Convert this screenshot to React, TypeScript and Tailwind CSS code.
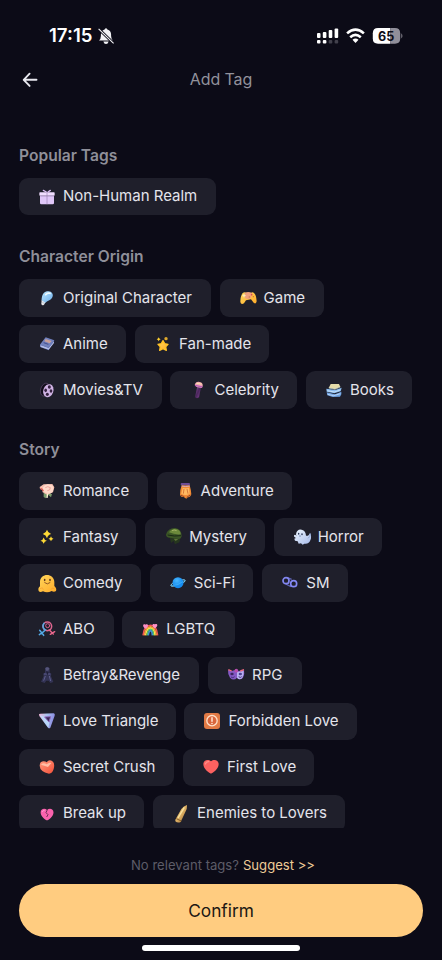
import type { ReactNode } from "react";

type Tag = { label: string; width: string; icon: ReactNode };

const heart = "M24 44C20 44 1 30 1 16C1 2 16-1 24 7C32-1 47 2 47 16C47 30 28 44 24 44Z";
const star = "M0-10Q2-2 10 0Q2 2 0 10Q-2 2-10 0Q-2-2 0-10Z";

const icons = {
  gift: (
    <g>
      <path d="M3 20H45V42Q45 46 41 46H7Q3 46 3 42Z" fill="#dfc6f8" />
      <rect x="1" y="10" width="46" height="10" rx="2" fill="#f0ddff" />
      <path d="M24 10V46M4 21H45" stroke="#9a80b4" strokeWidth="2" />
      <path d="M22 9L13 4M27 9L34 4" stroke="#d8bdf2" strokeWidth="4" strokeLinecap="round" />
    </g>
  ),
  bulb: (
    <g>
      <path d="M8 29L20 36L15 44Q9 48 7 42Z" fill="#e8e9ed" />
      <path d="M8 31C8 20 11 6 24 4C37 1 45 12 40 22C36 31 27 32 19 38Z" fill="url(#sky)" />
      <path d="M20 14Q26 7 33 10" stroke="#eefaff" strokeWidth="5" fill="none" strokeLinecap="round" />
      <path d="M10 37L17 41" stroke="#a5b7ca" strokeWidth="2" />
    </g>
  ),
  game: (
    <g>
      <path d="M8 9Q16 4 23 12H30Q36 4 42 9Q49 15 50 34Q48 44 41 38L33 28L18 31L12 40Q3 45 1 36Q1 18 8 9Z" fill="url(#sun)" />
      <path d="M14 9Q24 3 36 9L33 24Q22 30 14 23Z" fill="#f2a17d" />
      <path d="M12 12V22M7 17H17" stroke="#fff0bd" strokeWidth="3" />
      <circle cx="35" cy="14" r="2.5" fill="#d94f54" /><circle cx="40" cy="20" r="2" fill="#c2723a" /><circle cx="28" cy="21" r="2.5" fill="#d27a5a" />
    </g>
  ),
  anime: (
    <g>
      <path d="M20 5L46 14L29 43L3 33V26Z" fill="#5261a4" />
      <path d="M4 27L29 36L45 16V21L29 41L5 33Z" fill="#b4bee6" />
      <path d="M20 4L46 13L29 35L3 26Z" fill="#7181bd" />
      <path d="M20 9L38 15L32 22L16 16Z" fill="#c9a09a" /><path d="M14 20L28 25" stroke="#454d8c" strokeWidth="3" />
    </g>
  ),
  fan: (
    <g>
      <path d="M24 14L29 23L39 25L32 32L34 43L24 38L14 43L16 32L9 25L19 23Z" fill="url(#sun)" stroke="#ffc126" strokeWidth="4" strokeLinejoin="round" />
      <path d={star} transform="translate(11 10) scale(.6)" fill="#ffd12f" /><circle cx="33" cy="8" r="5" fill="#e0a92c" />
    </g>
  ),
  reel: (
    <g>
      <ellipse cx="18" cy="23" rx="13" ry="20" fill="#120d1a" stroke="#5a4669" strokeWidth="2" transform="rotate(18 18 23)" />
      <ellipse cx="28" cy="26" rx="15" ry="20" fill="#cfb2e3" transform="rotate(18 28 26)" />
      <g fill="#35203f"><ellipse cx="31" cy="15" rx="4.5" ry="5" /><ellipse cx="36" cy="27" rx="4" ry="5.5" /><ellipse cx="25" cy="37" rx="4.5" ry="5" /><ellipse cx="20" cy="25" rx="4" ry="5.5" /></g>
    </g>
  ),
  mic: (
    <g>
      <path d="M22 12L33 15L27 46Q21 51 15 46Z" fill="url(#violet)" />
      <path d="M14 9Q18-3 29 0Q40 2 38 13L35 18L20 15Z" fill="#f0a9b0" />
      <path d="M15 10L37 15" stroke="#b65bb9" strokeWidth="4" /><path d="M19 4L35 6" stroke="#ffe0b0" strokeWidth="3" />
    </g>
  ),
  books: (
    <g>
      <path d="M2 31L27 37L46 29V37L42 44L20 45L4 40Z" fill="#6fa3e2" />
      <path d="M5 37L23 41L43 35" stroke="#dceaff" strokeWidth="2" fill="none" />
      <path d="M1 20L28 24L47 17L44 28L25 34L2 29Z" fill="#8abcf0" />
      <path d="M4 26L25 30L43 24" stroke="#e3f1ff" strokeWidth="2" fill="none" />
      <path d="M14 6H39L43 15L27 22L8 18Z" fill="#e6dca9" /><path d="M8 18L27 22L43 15" stroke="#b6cbd2" strokeWidth="2" fill="none" />
    </g>
  ),
  rose: (
    <g>
      <path d="M14 28L39 33L36 43L28 36L20 46L14 42Z" fill="#7a9a6c" />
      <path d="M2 12L14 4L40 3L46 13L42 28L24 35L10 27L12 21L3 18Z" fill="#f5bfb0" />
      <path d="M12 13Q20 1 33 5Q44 7 43 17Q42 31 30 32Q17 32 12 22Z" fill="#ffd9ca" />
      <path d="M19 14Q26 8 34 14Q34 23 25 23" stroke="#e69a93" strokeWidth="2.5" fill="none" />
      <path d="M4 16Q11 17 13 24" stroke="#dc5a54" strokeWidth="4" fill="none" />
      <path d="M26 32L24 45" stroke="#fff1d4" strokeWidth="4" />
    </g>
  ),
  bag: (
    <g>
      <path d="M14 7H38Q42 20 43 34Q40 45 33 42L28 47L20 42Q11 44 9 35Q9 20 14 7Z" fill="#f08a35" />
      <path d="M17 14Q26 17 36 14L38 32Q26 40 13 32Z" fill="#ffb962" />
      <rect x="11" y="0" width="28" height="7" rx="3" fill="#6d4c93" /><path d="M14 9Q25 12 38 9" stroke="#d5aac0" strokeWidth="3" fill="none" />
      <path d="M21 18L19 32M30 18L33 32" stroke="#cf6a30" strokeWidth="2.5" fill="none" /><path d="M12 37L22 41M29 43L40 36" stroke="#9b4a2a" strokeWidth="3" />
    </g>
  ),
  sparkles: (
    <g fill="#ffda36"><path d={star} transform="translate(24 15) scale(1.25)" /><path d={star} transform="translate(14 35) scale(.95)" /><path d={star} transform="translate(36 29) scale(.75)" /></g>
  ),
  mystery: (
    <g>
      <path d="M14 24H47L43 40L30 46L26 36L18 42Z" fill="#26361f" />
      <path d="M3 17Q9-4 31-3Q50 0 50 22Q48 32 36 29L14 26Q4 26 3 17Z" fill="#3b5626" />
      <path d="M12 10Q22-3 37 1Q47 6 47 16Q30 18 12 10Z" fill="#6c8a3b" />
      <path d="M8 18Q28 23 48 20" stroke="#1a2915" strokeWidth="3" fill="none" /><path d="M21 5Q27 1 35 5" stroke="#a1b164" strokeWidth="3" fill="none" />
      <path d="M26 29L32 36L40 30" fill="#5d7437" />
    </g>
  ),
  ghost: (
    <g>
      <path d="M6 16C8 1 19-1 27 4Q35 8 36 20Q45 22 48 11Q54 24 49 34Q45 46 31 44L26 47L21 43L14 44L11 37L3 35L1 29L6 27Q-2 24 0 19Q4 15 7 22Z" fill="url(#ghost)" />
      <ellipse cx="14" cy="14" rx="2.2" ry="3" fill="#253251" /><ellipse cx="24" cy="16" rx="2.2" ry="3" fill="#253251" /><ellipse cx="18" cy="21" rx="1.8" ry="2.5" fill="#536a99" />
      <path d="M42 28Q49 24 49 14" fill="none" stroke="#8fa8d6" strokeWidth="3" />
    </g>
  ),
  smile: (
    <g>
      <path d="M3 21C3-7 45-7 46 21V33Q54 40 51 48Q45 53 38 48Q25 55 12 49Q3 54-1 48Q-4 39 3 34Z" fill="url(#sun)" />
      <ellipse cx="17" cy="15" rx="2.5" ry="3.5" fill="#5c351c" /><ellipse cx="33" cy="15" rx="2.5" ry="3.5" fill="#5c351c" />
      <path d="M17 23Q25 31 33 23" stroke="#7a431e" strokeWidth="2.5" fill="none" strokeLinecap="round" /><path d="M3 41Q12 36 13 44M46 41Q38 36 36 44" stroke="#f2992b" strokeWidth="2" fill="none" />
    </g>
  ),
  planet: (
    <g>
      <ellipse cx="24" cy="24" rx="23" ry="6" transform="rotate(-20 24 24)" stroke="#9aeaff" strokeWidth="2.5" fill="none" />
      <circle cx="24" cy="23" r="16.5" fill="url(#planet)" />
      <path d="M3 32Q24 33 45 16" stroke="#45b6fb" strokeWidth="2" fill="none" />
    </g>
  ),
  cuffs: (
    <g fill="none"><path d="M14 7L29 13M11 27L27 35" stroke="#5e62b4" strokeWidth="4" /><circle cx="12" cy="17" r="9" stroke="#8286ef" strokeWidth="5" /><circle cx="35" cy="26" r="9" stroke="#8488f2" strokeWidth="5" /></g>
  ),
  gender: (
    <g fill="none" strokeWidth="4.5" strokeLinecap="round"><circle cx="25" cy="16" r="13" stroke="#dd668f" /><path d="M15 7A13 13 0 0 0 19 27L7 38M2 28L14 43M1 41L8 36" stroke="#53a9e5" /><path d="M31 27L43 39M34 40L47 32" stroke="#e8668c" /><circle cx="26" cy="14" r="6" stroke="#d7608d" strokeWidth="3" /></g>
  ),
  rainbow: (
    <g fill="none" strokeWidth="4.4"><path d="M3 43Q6 13 26 13Q44 13 47 43" stroke="#f35356" /><path d="M7 43Q10 17 26 17Q40 18 43 43" stroke="#ff9b3b" /><path d="M11 43Q14 21 26 21Q36 22 39 43" stroke="#ffe553" /><path d="M15 43Q18 25 26 25Q33 26 35 43" stroke="#52c768" /><path d="M19 43Q21 29 26 29Q30 30 31 43" stroke="#4491d8" /><path d={heart} transform="translate(3 9) scale(.32)" fill="#fb8ec5" stroke="none" /><path d={heart} transform="translate(31 8) scale(.32)" fill="#ff91c6" stroke="none" /></g>
  ),
  cloak: (
    <g>
      <path d="M18 4Q25-6 32 4V17L37 20L36 28L43 45L34 48L29 41L22 41L17 48L6 44L14 27L12 20L18 17Z" fill="#333354" />
      <path d="M19 3Q25-2 31 4L28 11H21Z" fill="#55557a" /><path d="M15 21H34M19 27L14 41M31 27L35 42" stroke="#66669a" strokeWidth="2.5" /><path d="M21 13L29 15L25 26" fill="#20203a" />
    </g>
  ),
  masks: (
    <g>
      <path d="M0 9L12 12Q25 6 32 12L48 9Q51 22 45 32Q36 42 27 32Q17 43 6 32Q-1 23 0 9Z" fill="#8458c4" />
      <path d="M27 15L47 12Q48 26 42 34Q33 40 27 32Z" fill="#b7b0f0" />
      <ellipse cx="12" cy="21" rx="5" ry="4" fill="#3a2460" /><ellipse cx="37" cy="21" rx="5" ry="4" fill="#4d4192" />
      <path d="M9 30Q15 35 20 29M32 29Q37 34 41 29" stroke="#4a3483" strokeWidth="3" fill="none" />
      <circle cx="25" cy="11" r="5.5" fill="#b84eae" /><path d="M1 8L11 12M37 12L48 8" stroke="#f06c80" strokeWidth="4" />
    </g>
  ),
  triangle: (
    <g>
      <path d="M0 4Q0 2 4 2L44 1Q49 2 47 8L34 44Q31 48 27 44L1 9Z" fill="url(#tri)" />
      <path d="M2 6L28 44L31 29L15 11Z" fill="#bcdcfb" opacity=".85" /><path d="M17 12L35 11L30 27Z" fill="#3a2a58" stroke="#9169bf" strokeWidth="3" />
    </g>
  ),
  forbidden: (
    <g><rect width="48" height="48" rx="9" fill="#e27a45" /><circle cx="24" cy="23" r="15.5" fill="#d9653c" stroke="#ffe1c9" strokeWidth="4" /><path d="M24 14V25" stroke="#ffe8d5" strokeWidth="4.5" strokeLinecap="round" /><circle cx="24" cy="31.5" r="2.5" fill="#ffe8d5" /></g>
  ),
  crush: (
    <g><path d="M30 44Q3 38 2 20Q2 7 14 7Q20 7 23 10Q29 1 38 5Q49 11 44 30Q40 44 30 44Z" fill="url(#hot)" /><path d="M6 17Q13 9 23 16Q30 9 37 12L27 24Z" fill="#ffcab4" opacity=".85" /></g>
  ),
  love: (
    <g><path d={heart} fill="#fb6160" /><path d="M7 15Q10 7 17 8" stroke="#ff8f89" strokeWidth="4" fill="none" strokeLinecap="round" /></g>
  ),
  broken: (
    <g><path d={heart} transform="translate(4 6) scale(.84)" fill="#fa62ad" /><path d="M25 11L21 20L27 26L23 33" stroke="#502844" strokeWidth="2.5" fill="none" /><path d="M9 18Q11 13 17 13" stroke="#ff9bd0" strokeWidth="3" fill="none" /></g>
  ),
  bullet: (
    <g><path d="M7 41L25 9Q32 0 42-3Q43 8 37 18L23 48Q14 52 7 46Z" fill="url(#gold)" /><path d="M10 38L25 45" stroke="#76501e" strokeWidth="2.5" /><path d="M15 36L34 4" stroke="#fff0b0" strokeWidth="4" opacity=".8" /></g>
  ),
};

const sections: { title: string; margin: string; rows: Tag[][] }[] = [
  { title: "Popular Tags", margin: "mb-[31px]", rows: [[{ label: "Non-Human Realm", width: "w-[197px]", icon: icons.gift }]] },
  {
    title: "Character Origin", margin: "mb-[30.5px]",
    rows: [
      [{ label: "Original Character", width: "w-[191.8px]", icon: icons.bulb }, { label: "Game", width: "w-[104px]", icon: icons.game }],
      [{ label: "Anime", width: "w-[107.3px]", icon: icons.anime }, { label: "Fan-made", width: "w-[134.3px]", icon: icons.fan }],
      [{ label: "Movies&TV", width: "w-[142.7px]", icon: icons.reel }, { label: "Celebrity", width: "w-[126.7px]", icon: icons.mic }, { label: "Books", width: "w-[106px]", icon: icons.books }],
    ],
  },
  {
    title: "Story", margin: "",
    rows: [
      [{ label: "Romance", width: "w-[128.8px]", icon: icons.rose }, { label: "Adventure", width: "w-[135.4px]", icon: icons.bag }],
      [{ label: "Fantasy", width: "w-[117.4px]", icon: icons.sparkles }, { label: "Mystery", width: "w-[119.7px]", icon: icons.mystery }, { label: "Horror", width: "w-[108.7px]", icon: icons.ghost }],
      [{ label: "Comedy", width: "w-[122px]", icon: icons.smile }, { label: "Sci-Fi", width: "w-[103.7px]", icon: icons.planet }, { label: "SM", width: "w-[85.7px]", icon: icons.cuffs }],
      [{ label: "ABO", width: "w-[94.5px]", icon: icons.gender }, { label: "LGBTQ", width: "w-[113px]", icon: icons.rainbow }],
      [{ label: "Betray&Revenge", width: "w-[180.2px]", icon: icons.cloak }, { label: "RPG", width: "w-[93.7px]", icon: icons.masks }],
      [{ label: "Love Triangle", width: "w-[156.6px]", icon: icons.triangle }, { label: "Forbidden Love", width: "w-[172.5px]", icon: icons.forbidden }],
      [{ label: "Secret Crush", width: "w-[155.2px]", icon: icons.crush }, { label: "First Love", width: "w-[131.2px]", icon: icons.love }],
      [{ label: "Break up", width: "w-[125.3px]", icon: icons.broken }, { label: "Enemies to Lovers", width: "w-[192px]", icon: icons.bullet }],
    ],
  },
];

function Gradients() {
  return (
    <svg className="h-0 w-0 shrink-0" aria-hidden="true">
      <defs>
        <linearGradient id="sky" x1="0" y1="0" x2="1" y2="1"><stop stopColor="#b9e5ff" /><stop offset="1" stopColor="#6daee9" /></linearGradient>
        <linearGradient id="sun" x1="0" y1="0" x2="1" y2="1"><stop stopColor="#ffd75d" /><stop offset="1" stopColor="#ffab29" /></linearGradient>
        <linearGradient id="violet" x1="0" y1="0" x2="1" y2="1"><stop stopColor="#9254a0" /><stop offset=".5" stopColor="#49265b" /><stop offset="1" stopColor="#8a459a" /></linearGradient>
        <linearGradient id="ghost" x1="0" y1="0" x2="1" y2="1"><stop stopColor="#eff7ff" /><stop offset="1" stopColor="#a5b9e9" /></linearGradient>
        <radialGradient id="planet" cx=".4" cy=".3"><stop stopColor="#49b8ff" /><stop offset="1" stopColor="#168cf0" /></radialGradient>
        <linearGradient id="tri" x1="0" y1="0" x2="1" y2=".2"><stop stopColor="#f3b4d8" /><stop offset=".5" stopColor="#a9c4f0" /><stop offset="1" stopColor="#8a88e0" /></linearGradient>
        <linearGradient id="hot" x1="0" y1="0" x2="1" y2="1"><stop stopColor="#ff9c80" /><stop offset="1" stopColor="#f34f38" /></linearGradient>
        <linearGradient id="gold" x1="0" y1="0" x2="1" y2="1"><stop stopColor="#f3c35d" /><stop offset=".5" stopColor="#ddb066" /><stop offset="1" stopColor="#9b6427" /></linearGradient>
      </defs>
    </svg>
  );
}

function Chip({ tag }: { tag: Tag }) {
  return (
    <button className={`flex h-[37.3px] shrink-0 items-center gap-2 rounded-[9px] bg-[#1f1f2b] pl-5 text-[15px] whitespace-nowrap text-[#e4e4eb] ${tag.width}`}>
      <svg viewBox="0 0 48 48" className="size-4 shrink-0 overflow-visible">{tag.icon}</svg>
      <span>{tag.label}</span>
    </button>
  );
}

function StatusBar() {
  return (
    <div className="flex h-[58px] shrink-0 items-start pt-[24px] pl-[49px]">
      <div className="flex h-6 w-[268px] items-center">
        <span className="w-[48px] text-[18.6px] font-semibold text-white">17:15</span>
        <svg viewBox="0 0 18 18" className="h-[18px] w-[18px]">
          <path d="M2 13.6Q3.8 12 3.9 9V7.5Q4 3.3 7.6 2.4Q9 .2 10.4 2.4Q14 3.3 14.1 7.5V9Q14.2 12 16 13.6Z" fill="#f2f2f5" />
          <path d="M6.4 14.5H11.6Q11 17 9 17Q7 17 6.4 14.5Z" fill="#f2f2f5" />
          <path d="M2 2.2L17 16.8" stroke="#0c0b17" strokeWidth="2.8" /><path d="M1.6 1.8L16.6 16.4" stroke="#f2f2f5" strokeWidth="1.1" />
        </svg>
      </div>
      <svg viewBox="0 0 86 20" className="mt-[2px] h-5 w-[86px] text-white">
        <g fill="currentColor"><rect y="7" width="3.5" height="5" rx="1" /><rect x="5.8" y="6" width="3.6" height="6" rx="1" /><rect x="11.7" y="4" width="3.6" height="8" rx="1" /><rect x="17.6" y="2.4" width="3.6" height="9.6" rx="1" /><rect y="14" width="3.5" height="3.6" rx="1" /><rect x="5.8" y="14" width="3.6" height="3.6" rx="1" /></g>
        <g fill="#42414c"><rect x="11.7" y="14" width="3.6" height="3.6" rx="1" /><rect x="17.6" y="14" width="3.6" height="3.6" rx="1" /></g>
        <g fill="none" stroke="currentColor" strokeWidth="2.6"><path d="M30.1 7.4Q38.5 -.2 46.9 7.4" /><path d="M33.2 11.2Q38.5 6.6 43.8 11.2" /></g>
        <path d="M35.5 13.7Q38.5 11.4 41.5 13.7L38.5 17Z" fill="currentColor" />
        <path d="M61 2H73.2V17.8H61Q55.8 17.8 55.8 12.6V7.2Q55.8 2 61 2Z" fill="currentColor" />
        <path d="M73.2 2H78Q83.2 2 83.2 7.2V12.6Q83.2 17.8 78 17.8H73.2Z" fill="#918f9a" /><path d="M84.2 7.2Q86.8 9.9 84.2 12.6Z" fill="#77757f" />
        <text x="69.2" y="14.5" textAnchor="middle" fontSize="12.6" fontWeight="700" fill="#111019">65</text>
      </svg>
    </div>
  );
}

export default function App() {
  return (
    <main className="flex h-[960px] w-[442px] flex-col overflow-hidden bg-[#0c0b17] font-[Inter,'Liberation_Sans',sans-serif]">
      <Gradients />
      <StatusBar />
      <header className="flex h-[42px] shrink-0 items-center px-[21px]">
        <button className="flex w-12 items-center" aria-label="Back">
          <svg viewBox="0 0 18 18" className="size-[18px]" fill="none" stroke="#e8e8ef" strokeWidth="1.9" strokeLinecap="round" strokeLinejoin="round"><path d="M15.5 9.8H2.8M8.6 3.7L2.7 9.8L8.6 15.9" /></svg>
        </button>
        <h1 className="-mt-px flex-1 text-center text-[16px] tracking-[-0.1px] text-[#92929c]">Add Tag</h1>
        <div className="w-12" />
      </header>
      <div className="h-[728px] shrink-0 overflow-hidden pt-[45px] pl-[19px]">
        {sections.map((section) => (
          <section key={section.title} className={section.margin}>
            <h2 className="mb-[11px] h-[22px] text-[15.6px] leading-[22px] font-semibold text-[#8f8f99]">{section.title}</h2>
            <div className="flex flex-col gap-[8.8px]">
              {section.rows.map((row, index) => (
                <div key={index} className="flex gap-[8.8px]">{row.map((tag) => <Chip key={tag.label} tag={tag} />)}</div>
              ))}
            </div>
          </section>
        ))}
      </div>
      <footer className="flex flex-1 flex-col items-center pt-[27px]">
        <p className="flex h-[22px] items-center gap-1 pb-px pl-1 text-[13.1px] text-[#5d5c68]"><span>No relevant tags?</span><button className="text-[#efcc98]">Suggest &gt;&gt;</button></p>
        <button className="mt-[7px] h-[53px] w-[404px] shrink-0 rounded-full bg-[#ffcc80] text-[17.3px] text-[#201713]">Confirm</button>
        <div className="mt-2 h-[6px] w-[158px] shrink-0 rounded-full bg-white" />
      </footer>
    </main>
  );
}
